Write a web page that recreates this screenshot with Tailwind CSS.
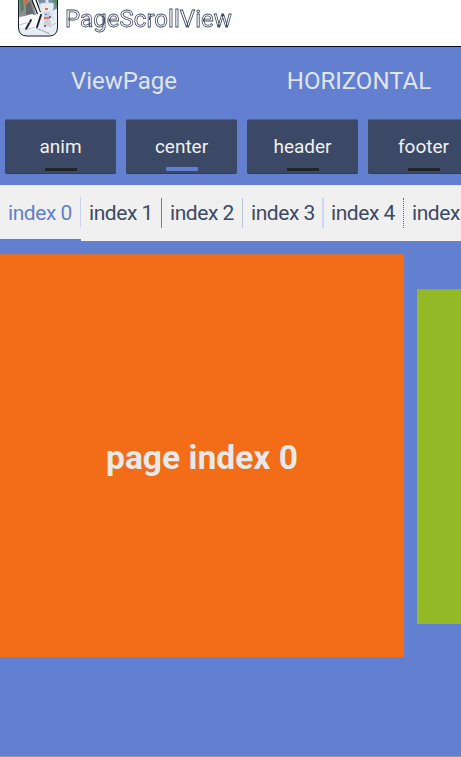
<!DOCTYPE html>
<html lang="en">
<head>
<meta charset="utf-8">
<title>PageScrollView</title>
<script src="https://cdn.jsdelivr.net/npm/@tailwindcss/browser@4"></script>
</head>
<body class="w-[461px] h-[757px] overflow-hidden bg-[#637fcf] font-[Roboto,sans-serif] antialiased flex flex-col">
<header class="h-[47px] shrink-0 bg-white border-b border-[#080c1c] flex items-start">
  <svg class="ml-[18px] w-10 h-[37px] shrink-0" viewBox="0 0 40 37" fill="none">
    <defs><clipPath id="c"><path d="M0 0H40V27Q40 36.500 31 36.500H9Q0 36.500 0 27Z"/></clipPath></defs>
    <g clip-path="url(#c)">
      <path fill="#e9edf3" d="M0 0H40V37H0Z"/>
      <path fill="#8c8e8d" d="M0 0H14L18 15 0 17Z"/>
      <path fill="#508560" d="M2 0H5L6 9 3 13Z"/>
      <path fill="#d56e45" d="M6 0H9L10 4 7 6Z"/>
      <path fill="#656a70" d="M8 5L12 1 16 14 8 15Z"/>
      <path fill="#7690a0" d="M20 0H40V8L34 11H24Z"/>
      <path fill="#549265" d="M35 0L40 8V0Z"/>
      <path fill="#f8f9fb" d="M0 18L14 14 23 18 17 29 0 27Z"/>
      <path stroke="#fff" stroke-width="3" d="M16 0L22 16"/>
      <path stroke="#101522" stroke-width="1.200" d="M14 0L19.500 14M18 0L22.500 12"/>
      <path fill="#e9ebef" stroke="#d4d9df" stroke-width=".6" d="M22 5Q22 3 25 3H34Q36 3 35.500 6L35 10Q34 12 31 12H25Q22.500 12 22 9Z"/>
      <path stroke="#e1e6ec" stroke-width="3" d="M29 0V4"/>
      <path fill="#eb7549" d="M27 8H30V10H27Z"/>
      <path fill="#cbd2dc" d="M26 12H32L33 26H26Z"/>
      <path stroke="#dce1e8" stroke-width="2" d="M25 13L21 18M33 13L36 20"/>
      <path fill="#eb7549" d="M26 17H31V19H26Z"/>
      <path fill="#5971bd" d="M31 16H33V18H31ZM27 14H29V15H27ZM26 25H28V27H26Z"/>
      <path stroke="#182033" stroke-width="1.900" stroke-linecap="round" d="M13 20L8 29M23 15L19 27"/>
      <path stroke="#b5bdc8" stroke-width=".8" d="M1 25L12 22M7 30L17 27M31 27L38 23"/>
      <path stroke="#5b70a5" stroke-width=".9" stroke-dasharray="2 1" d="M18 28L32 34"/>
    </g>
    <path stroke="#171d30" stroke-width="1" d="M.5 0V27Q.5 36 9 36H31Q39.500 36 39.500 27V0"/>
  </svg>
  <h1 class="ml-[7px] mt-[4px] text-[24px] leading-[30px] tracking-[0.05px] text-white whitespace-nowrap will-change-transform [-webkit-text-stroke:0.8px_#3c4862]">PageScrollView</h1>
</header>
<div class="h-[72px] shrink-0 flex text-[24px] leading-[68px] text-[#e0e4ee]">
  <div class="w-[248px] text-center shrink-0">ViewPage</div>
  <div class="w-[213px] pl-[9px] text-center shrink-0">HORIZONTAL</div>
</div>
<div class="h-[66px] w-[461px] overflow-hidden shrink-0 flex gap-[10px] pl-[5px] text-[19px] leading-[55px] text-[#f0f1f3] text-center">
  <div class="w-[111px] h-[55px] shrink-0 rounded-[2px] bg-[#3c4966] border-t border-b border-t-[#536080] border-b-[#303b58] flex flex-col items-center"><span class="h-[48px] leading-[54px]">anim</span><i class="w-8 h-[3px] bg-[#202328]"></i></div>
  <div class="w-[111px] h-[55px] shrink-0 rounded-[2px] bg-[#3c4966] border-t border-b border-t-[#536080] border-b-[#303b58] flex flex-col items-center"><span class="h-[47px] leading-[54px]">center</span><i class="w-8 h-1 rounded-[1px] bg-[#627fcf]"></i></div>
  <div class="w-[111px] h-[55px] shrink-0 rounded-[2px] bg-[#3c4966] border-t border-b border-t-[#536080] border-b-[#303b58] flex flex-col items-center"><span class="h-[48px] leading-[54px]">header</span><i class="w-8 h-[3px] bg-[#202328]"></i></div>
  <div class="w-[111px] h-[55px] shrink-0 rounded-[2px] bg-[#3c4966] border-t border-b border-t-[#536080] border-b-[#303b58] flex flex-col items-center"><span class="h-[48px] leading-[54px]">footer</span><i class="w-8 h-[3px] bg-[#202328]"></i></div>
</div>
<nav class="h-[56px] w-[461px] overflow-hidden shrink-0 flex text-[21px] tracking-[-0.45px] leading-[56px] text-[#3c4966] whitespace-nowrap">
  <div class="w-[81px] h-[54px] shrink-0 bg-[#f0f0f0] flex items-center justify-between pl-2 text-[#627fcf]"><span class="pt-[2px]">index 0</span><i class="w-px h-[30px] bg-[#ccd4e9]"></i></div>
  <div class="w-[81px] shrink-0 bg-[#f0f0f0] flex items-center justify-between pl-2"><span>index 1</span><i class="w-px h-[30px] bg-[#627fcf]"></i></div>
  <div class="w-[81px] shrink-0 bg-[#f0f0f0] flex items-center justify-between pl-2"><span>index 2</span><i class="w-px h-[30px] bg-[#c0c5d7]"></i></div>
  <div class="w-[81px] shrink-0 bg-[#f0f0f0] flex items-center justify-between pl-2"><span>index 3</span><i class="w-[2px] h-[30px] bg-[#cbd6f1]"></i></div>
  <div class="w-[80px] shrink-0 bg-[#f0f0f0] flex items-center justify-between pl-[7px]"><span>index 4</span><i class="w-px h-[30px] border-l border-dotted border-[#596680]"></i></div>
  <div class="w-[57px] shrink-0 bg-[#f0f0f0] pl-2">index</div>
</nav>
<main class="h-[515px] w-[461px] overflow-hidden pt-[13px] flex items-start gap-[13px]">
  <section class="w-[404px] h-[403px] shrink-0 bg-[#f36d19] border-t border-[#cc744b] flex items-center justify-center text-[33.600px] font-bold text-[#e9e9e9]"><span class="pt-[5px]">page index 0</span></section>
  <section class="w-[44px] h-[335px] mt-[35px] shrink-0 bg-[#93b926] border-t border-[#8caa48]"></section>
</main>
<div class="h-px shrink-0 bg-[#8298b8]"></div>
</body>
</html>
